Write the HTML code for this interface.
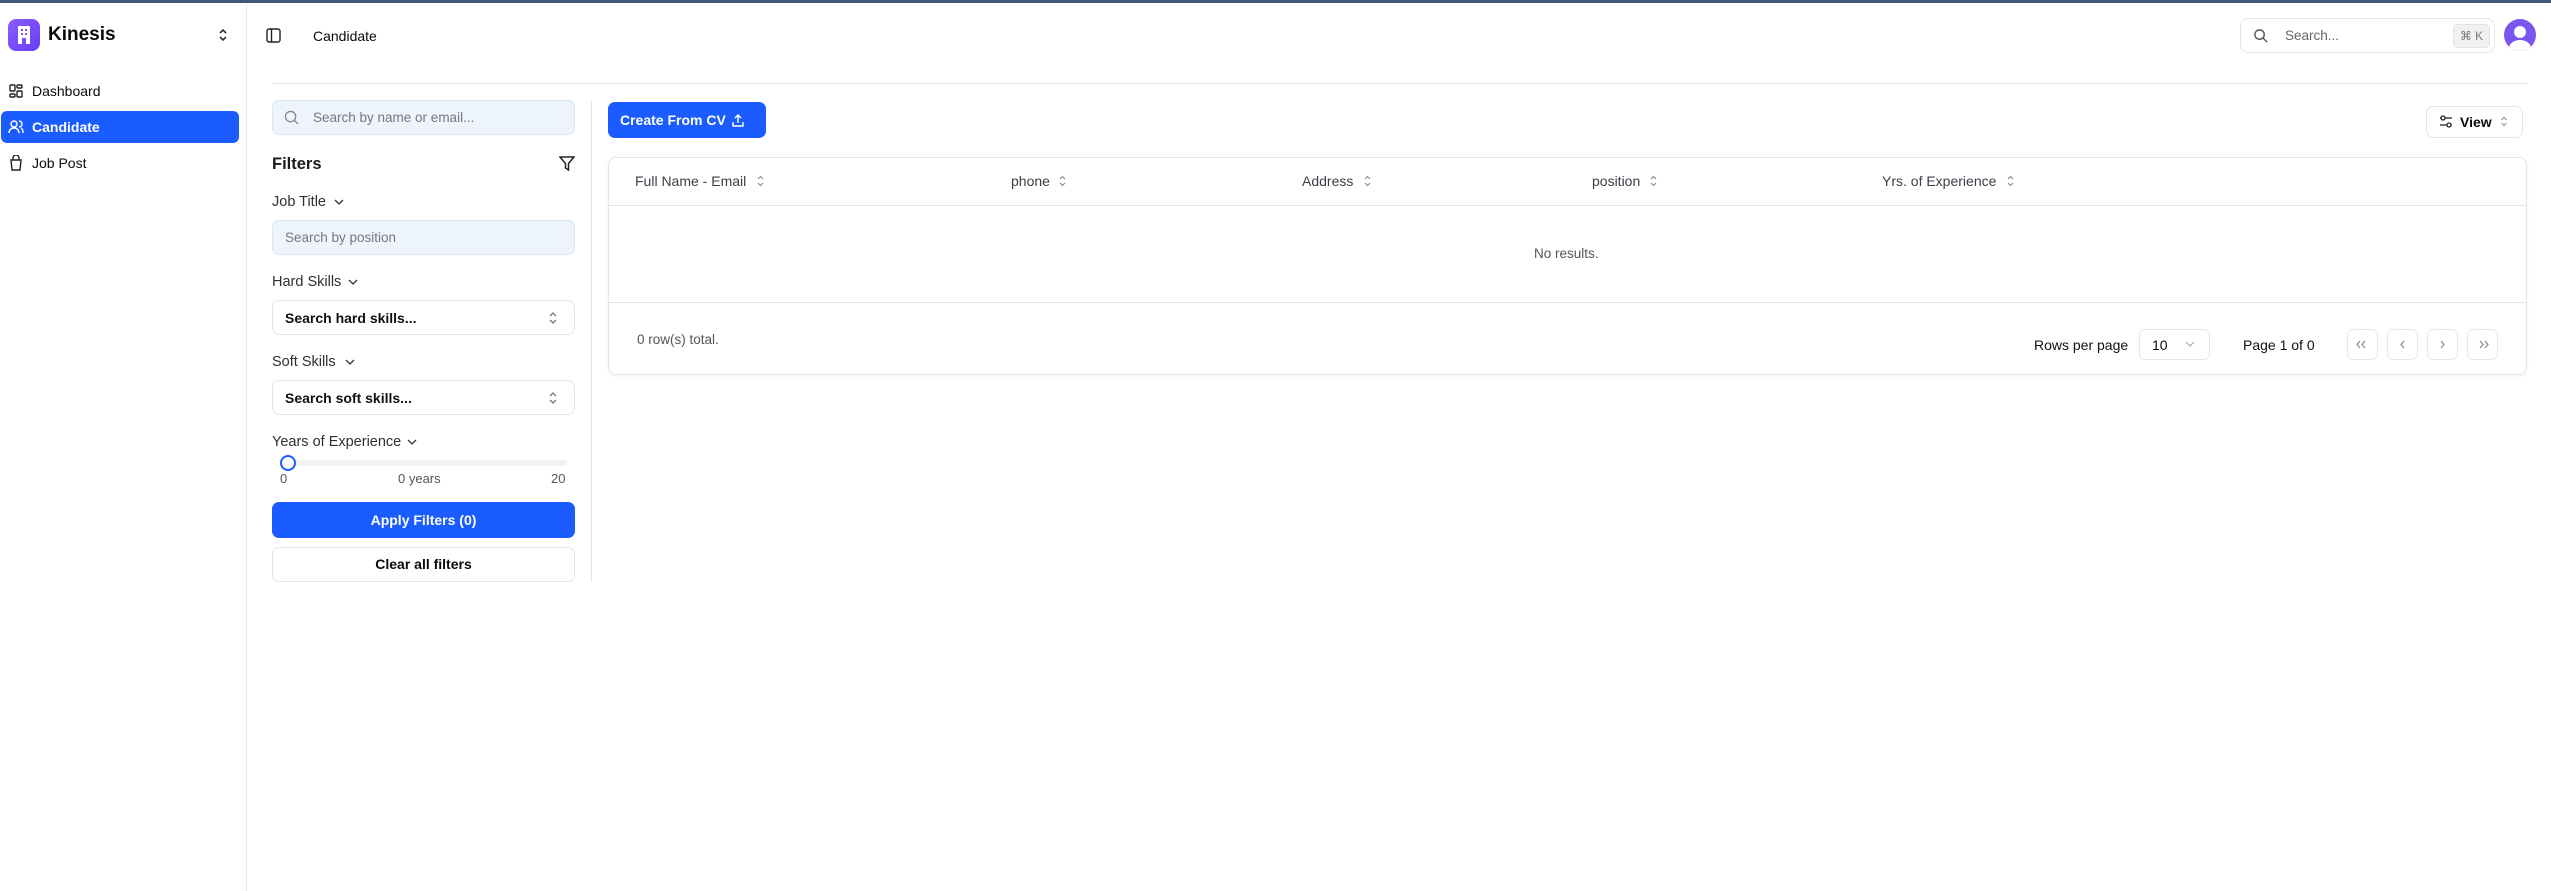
<!DOCTYPE html>
<html><head><meta charset="utf-8"><style>
*{box-sizing:border-box;margin:0;padding:0}
body{width:2551px;height:891px;overflow:hidden;background:#fff;font-family:"Liberation Sans",sans-serif;color:#0a0a0a;position:relative;font-size:14px}
.a{position:absolute}
.topbar{left:0;top:0;width:2551px;height:3px;background:#3f5878}
.side{left:0;top:3px;width:247px;height:888px;border-right:1px solid #e8e8e8}
.t{position:absolute;white-space:nowrap}
.inp{position:absolute;border:1px solid #e3e6ea;border-radius:7px;background:#fff}
.blue{background:#1a5cff;color:#fff;border-radius:7px}
svg{position:absolute}
.lbl{font-size:14.5px;color:#2b2f36}
.hd{font-size:14px;color:#3a3f47}
.pg{position:absolute;top:329px;width:31px;height:31px;border:1px solid #e6e8eb;border-radius:6px}
</style></head><body>
<div class="a topbar"></div>
<div class="a side"></div>
<div class="a" style="left:8px;top:19px;width:32px;height:32px;border-radius:8px;background:linear-gradient(135deg,#8a5cff,#6a3df5)"></div>
<svg style="left:15px;top:25px" width="18" height="20" viewBox="0 0 18 20"><rect x="3" y="1" width="12" height="18" rx="1" fill="#fff"/><rect x="6" y="4" width="2" height="2" fill="#7b4df8"/><rect x="10" y="4" width="2" height="2" fill="#7b4df8"/><rect x="6" y="8" width="2" height="2" fill="#7b4df8"/><rect x="10" y="8" width="2" height="2" fill="#7b4df8"/><rect x="7" y="13" width="4" height="6" fill="#7b4df8"/></svg>
<div class="t" style="left:48px;top:24px;font-size:19px;font-weight:bold">Kinesis</div>
<svg style="left:217px;top:27px" width="12" height="16" viewBox="0 0 12 16" fill="none" stroke="#333" stroke-width="1.6"><path d="M3 6l3-3 3 3M3 10l3 3 3-3"/></svg>
<svg style="left:9px;top:84px" width="14" height="14" viewBox="0 0 14 14" fill="none" stroke="#222" stroke-width="1.4"><rect x="1" y="1" width="5" height="6" rx="1"/><rect x="8" y="1" width="5" height="3" rx="1"/><rect x="8" y="7" width="5" height="6" rx="1"/><rect x="1" y="10" width="5" height="3" rx="1"/></svg>
<div class="t" style="left:32px;top:83px">Dashboard</div>
<div class="a blue" style="left:1px;top:111px;width:238px;height:32px;border-radius:6px"></div>
<svg style="left:8px;top:120px" width="16" height="14" viewBox="0 0 16 14" fill="none" stroke="#fff" stroke-width="1.4"><circle cx="6" cy="4" r="3"/><path d="M1 13c0-3 2-5 5-5s5 2 5 5M11 1a3 3 0 010 6M13 8c1.5.7 2 2.5 2 5"/></svg>
<div class="t" style="left:32px;top:119px;color:#fff;font-weight:bold">Candidate</div>
<svg style="left:9px;top:155px" width="14" height="16" viewBox="0 0 14 16" fill="none" stroke="#222" stroke-width="1.4"><path d="M4 5V3a3 3 0 016 0v2M2 5h10l-1 10H3z"/></svg>
<div class="t" style="left:32px;top:155px">Job Post</div>
<svg style="left:266px;top:28px" width="15" height="15" viewBox="0 0 15 15" fill="none" stroke="#222" stroke-width="1.4"><rect x="1" y="1" width="13" height="13" rx="2"/><path d="M5.5 1v13"/></svg>
<div class="t" style="left:313px;top:28px;font-size:14px">Candidate</div>
<div class="inp" style="left:2240px;top:18px;width:255px;height:35px;border-radius:8px"></div>
<svg style="left:2253px;top:28px" width="15" height="15" viewBox="0 0 16 16" fill="none" stroke="#555" stroke-width="1.5"><circle cx="7" cy="7" r="5"/><path d="M11 11l4 4"/></svg>
<div class="t" style="left:2285px;top:28px;color:#666;font-size:13.5px">Search...</div>
<div class="a" style="left:2453px;top:24px;width:37px;height:24px;background:#f1f1f1;border:1px solid #e3e3e3;border-radius:5px;font-size:12px;color:#777;text-align:center;line-height:22px">⌘ K</div>
<div class="a" style="left:2504px;top:19px;width:32px;height:32px;border-radius:50%;background:#7a55f0;overflow:hidden"><div class="a" style="left:10px;top:7px;width:12px;height:12px;border-radius:50%;background:#fff"></div><div class="a" style="left:5px;top:21px;width:22px;height:16px;border-radius:50%;background:#fff"></div></div>
<div class="a" style="left:272px;top:83px;width:2255px;height:1px;background:#e5e5e5"></div>
<div class="inp" style="left:272px;top:100px;width:303px;height:35px;background:#eef4fd;border-color:#dfe6ef"></div>
<svg style="left:284px;top:110px" width="15" height="15" viewBox="0 0 16 16" fill="none" stroke="#888" stroke-width="1.4"><circle cx="7" cy="7" r="5.5"/><path d="M11 11l4 4"/></svg>
<div class="t" style="left:313px;top:110px;color:#777;font-size:13.5px">Search by name or email...</div>
<div class="t" style="left:272px;top:155px;font-size:16.5px;font-weight:bold;color:#1a1a1a">Filters</div>
<svg style="left:559px;top:155px" width="16" height="16" viewBox="0 0 16 16" fill="none" stroke="#222" stroke-width="1.5"><path d="M1 2h14l-5.5 6.5V15l-3-2V8.5z"/></svg>
<div class="t lbl" style="left:272px;top:194px">Job Title</div>
<svg style="left:334px;top:199px" width="10" height="7" viewBox="0 0 10 7" fill="none" stroke="#333" stroke-width="1.3"><path d="M1 1l4 4 4-4"/></svg>
<div class="inp" style="left:272px;top:220px;width:303px;height:35px;background:#eef4fd;border-color:#dfe6ef"></div>
<div class="t" style="left:285px;top:230px;color:#777;font-size:13.5px">Search by position</div>
<div class="t lbl" style="left:272px;top:274px">Hard Skills</div>
<svg style="left:348px;top:279px" width="10" height="7" viewBox="0 0 10 7" fill="none" stroke="#333" stroke-width="1.3"><path d="M1 1l4 4 4-4"/></svg>
<div class="inp" style="left:272px;top:300px;width:303px;height:35px"></div>
<div class="t" style="left:285px;top:310px;font-size:14px;font-weight:bold;color:#111">Search hard skills...</div>
<svg style="left:548px;top:311px" width="10" height="14" viewBox="0 0 10 14" fill="none" stroke="#777" stroke-width="1.3"><path d="M2 5l3-3 3 3M2 9l3 3 3-3"/></svg>
<div class="t lbl" style="left:272px;top:354px">Soft Skills</div>
<svg style="left:345px;top:359px" width="10" height="7" viewBox="0 0 10 7" fill="none" stroke="#333" stroke-width="1.3"><path d="M1 1l4 4 4-4"/></svg>
<div class="inp" style="left:272px;top:380px;width:303px;height:35px"></div>
<div class="t" style="left:285px;top:390px;font-size:14px;font-weight:bold;color:#111">Search soft skills...</div>
<svg style="left:548px;top:391px" width="10" height="14" viewBox="0 0 10 14" fill="none" stroke="#777" stroke-width="1.3"><path d="M2 5l3-3 3 3M2 9l3 3 3-3"/></svg>
<div class="t lbl" style="left:272px;top:434px">Years of Experience</div>
<svg style="left:407px;top:439px" width="10" height="7" viewBox="0 0 10 7" fill="none" stroke="#333" stroke-width="1.3"><path d="M1 1l4 4 4-4"/></svg>
<div class="a" style="left:282px;top:460px;width:285px;height:6px;border-radius:3px;background:#f1f2f4"></div>
<div class="a" style="left:280px;top:455px;width:16px;height:16px;border-radius:50%;border:2px solid #1a5cff;background:#fff"></div>
<div class="t" style="left:280px;top:471px;font-size:13px;color:#555">0</div>
<div class="t" style="left:398px;top:471px;font-size:13px;color:#555">0 years</div>
<div class="t" style="left:551px;top:471px;font-size:13px;color:#555">20</div>
<div class="a blue" style="left:272px;top:502px;width:303px;height:36px;text-align:center;line-height:36px;font-weight:bold;font-size:14px">Apply Filters (0)</div>
<div class="inp" style="left:272px;top:547px;width:303px;height:35px;text-align:center;line-height:33px;font-weight:bold;font-size:14px">Clear all filters</div>
<div class="a" style="left:591px;top:100px;width:1px;height:482px;background:#e5e5e5"></div>
<div class="a blue" style="left:608px;top:102px;width:158px;height:36px;font-weight:bold;font-size:14px;line-height:36px;padding-left:12px">Create From CV</div>
<svg style="left:732px;top:113px" width="12" height="14" viewBox="0 0 12 14" fill="none" stroke="#fff" stroke-width="1.4"><path d="M6 10V2M3 5l3-3 3 3M1 9v4h10V9"/></svg>
<div class="inp" style="left:2426px;top:106px;width:97px;height:32px"></div>
<svg style="left:2439px;top:114px" width="14" height="15" viewBox="0 0 14 15" fill="none" stroke="#222" stroke-width="1.3"><path d="M1 4h12M1 11h12"/><circle cx="4" cy="4" r="2" fill="#fff"/><circle cx="10" cy="11" r="2" fill="#fff"/></svg>
<div class="t" style="left:2460px;top:114px;font-size:14px;font-weight:bold">View</div>
<svg style="left:2500px;top:115px" width="8" height="13" viewBox="0 0 10 14" fill="none" stroke="#888" stroke-width="1.3"><path d="M2 5l3-3 3 3M2 9l3 3 3-3"/></svg>
<div class="inp" style="left:608px;top:157px;width:1919px;height:218px;border-radius:8px;box-shadow:0 1px 3px rgba(0,0,0,.06)"></div>
<div class="a" style="left:609px;top:205px;width:1917px;height:1px;background:#e5e5e5"></div>
<div class="a" style="left:609px;top:302px;width:1917px;height:1px;background:#e5e5e5"></div>
<div class="t hd" style="left:635px;top:173px">Full Name - Email</div>
<div class="t hd" style="left:1011px;top:173px">phone</div>
<div class="t hd" style="left:1302px;top:173px">Address</div>
<div class="t hd" style="left:1592px;top:173px">position</div>
<div class="t hd" style="left:1882px;top:173px">Yrs. of Experience</div>
<svg style="left:0;top:174px" width="2100" height="14" viewBox="0 0 2100 14" fill="none" stroke="#888" stroke-width="1.1"><g id="s"><path d="M758 5l2.5-2.5 2.5 2.5M758 9l2.5 2.5 2.5-2.5"/></g><path d="M1060 5l2.5-2.5 2.5 2.5M1060 9l2.5 2.5 2.5-2.5M1365 5l2.5-2.5 2.5 2.5M1365 9l2.5 2.5 2.5-2.5M1651 5l2.5-2.5 2.5 2.5M1651 9l2.5 2.5 2.5-2.5M2008 5l2.5-2.5 2.5 2.5M2008 9l2.5 2.5 2.5-2.5"/></svg>
<div class="t" style="left:1534px;top:246px;font-size:13.5px;color:#555">No results.</div>
<div class="t" style="left:637px;top:332px;font-size:13.5px;color:#555">0 row(s) total.</div>
<div class="t" style="left:2034px;top:337px;font-size:14px;color:#111">Rows per page</div>
<div class="inp" style="left:2139px;top:329px;width:71px;height:31px;border-radius:6px"></div>
<div class="t" style="left:2152px;top:337px;font-size:14px">10</div>
<svg style="left:2185px;top:341px" width="10" height="7" viewBox="0 0 10 7" fill="none" stroke="#aaa" stroke-width="1.2"><path d="M1 1l4 4 4-4"/></svg>
<div class="t" style="left:2243px;top:337px;font-size:14px;color:#111">Page 1 of 0</div>
<div class="pg" style="left:2347px"></div><div class="pg" style="left:2387px"></div><div class="pg" style="left:2427px"></div><div class="pg" style="left:2467px"></div>
<svg style="left:2347px;top:329px" width="160" height="31" viewBox="0 0 160 31" fill="none" stroke="#888" stroke-width="1.2"><path d="M13 12l-3 3.5 3 3.5M18 12l-3 3.5 3 3.5M57 12l-3 3.5 3 3.5M94 12l3 3.5-3 3.5M133 12l3 3.5-3 3.5M138 12l3 3.5-3 3.5"/></svg>
</body></html>
